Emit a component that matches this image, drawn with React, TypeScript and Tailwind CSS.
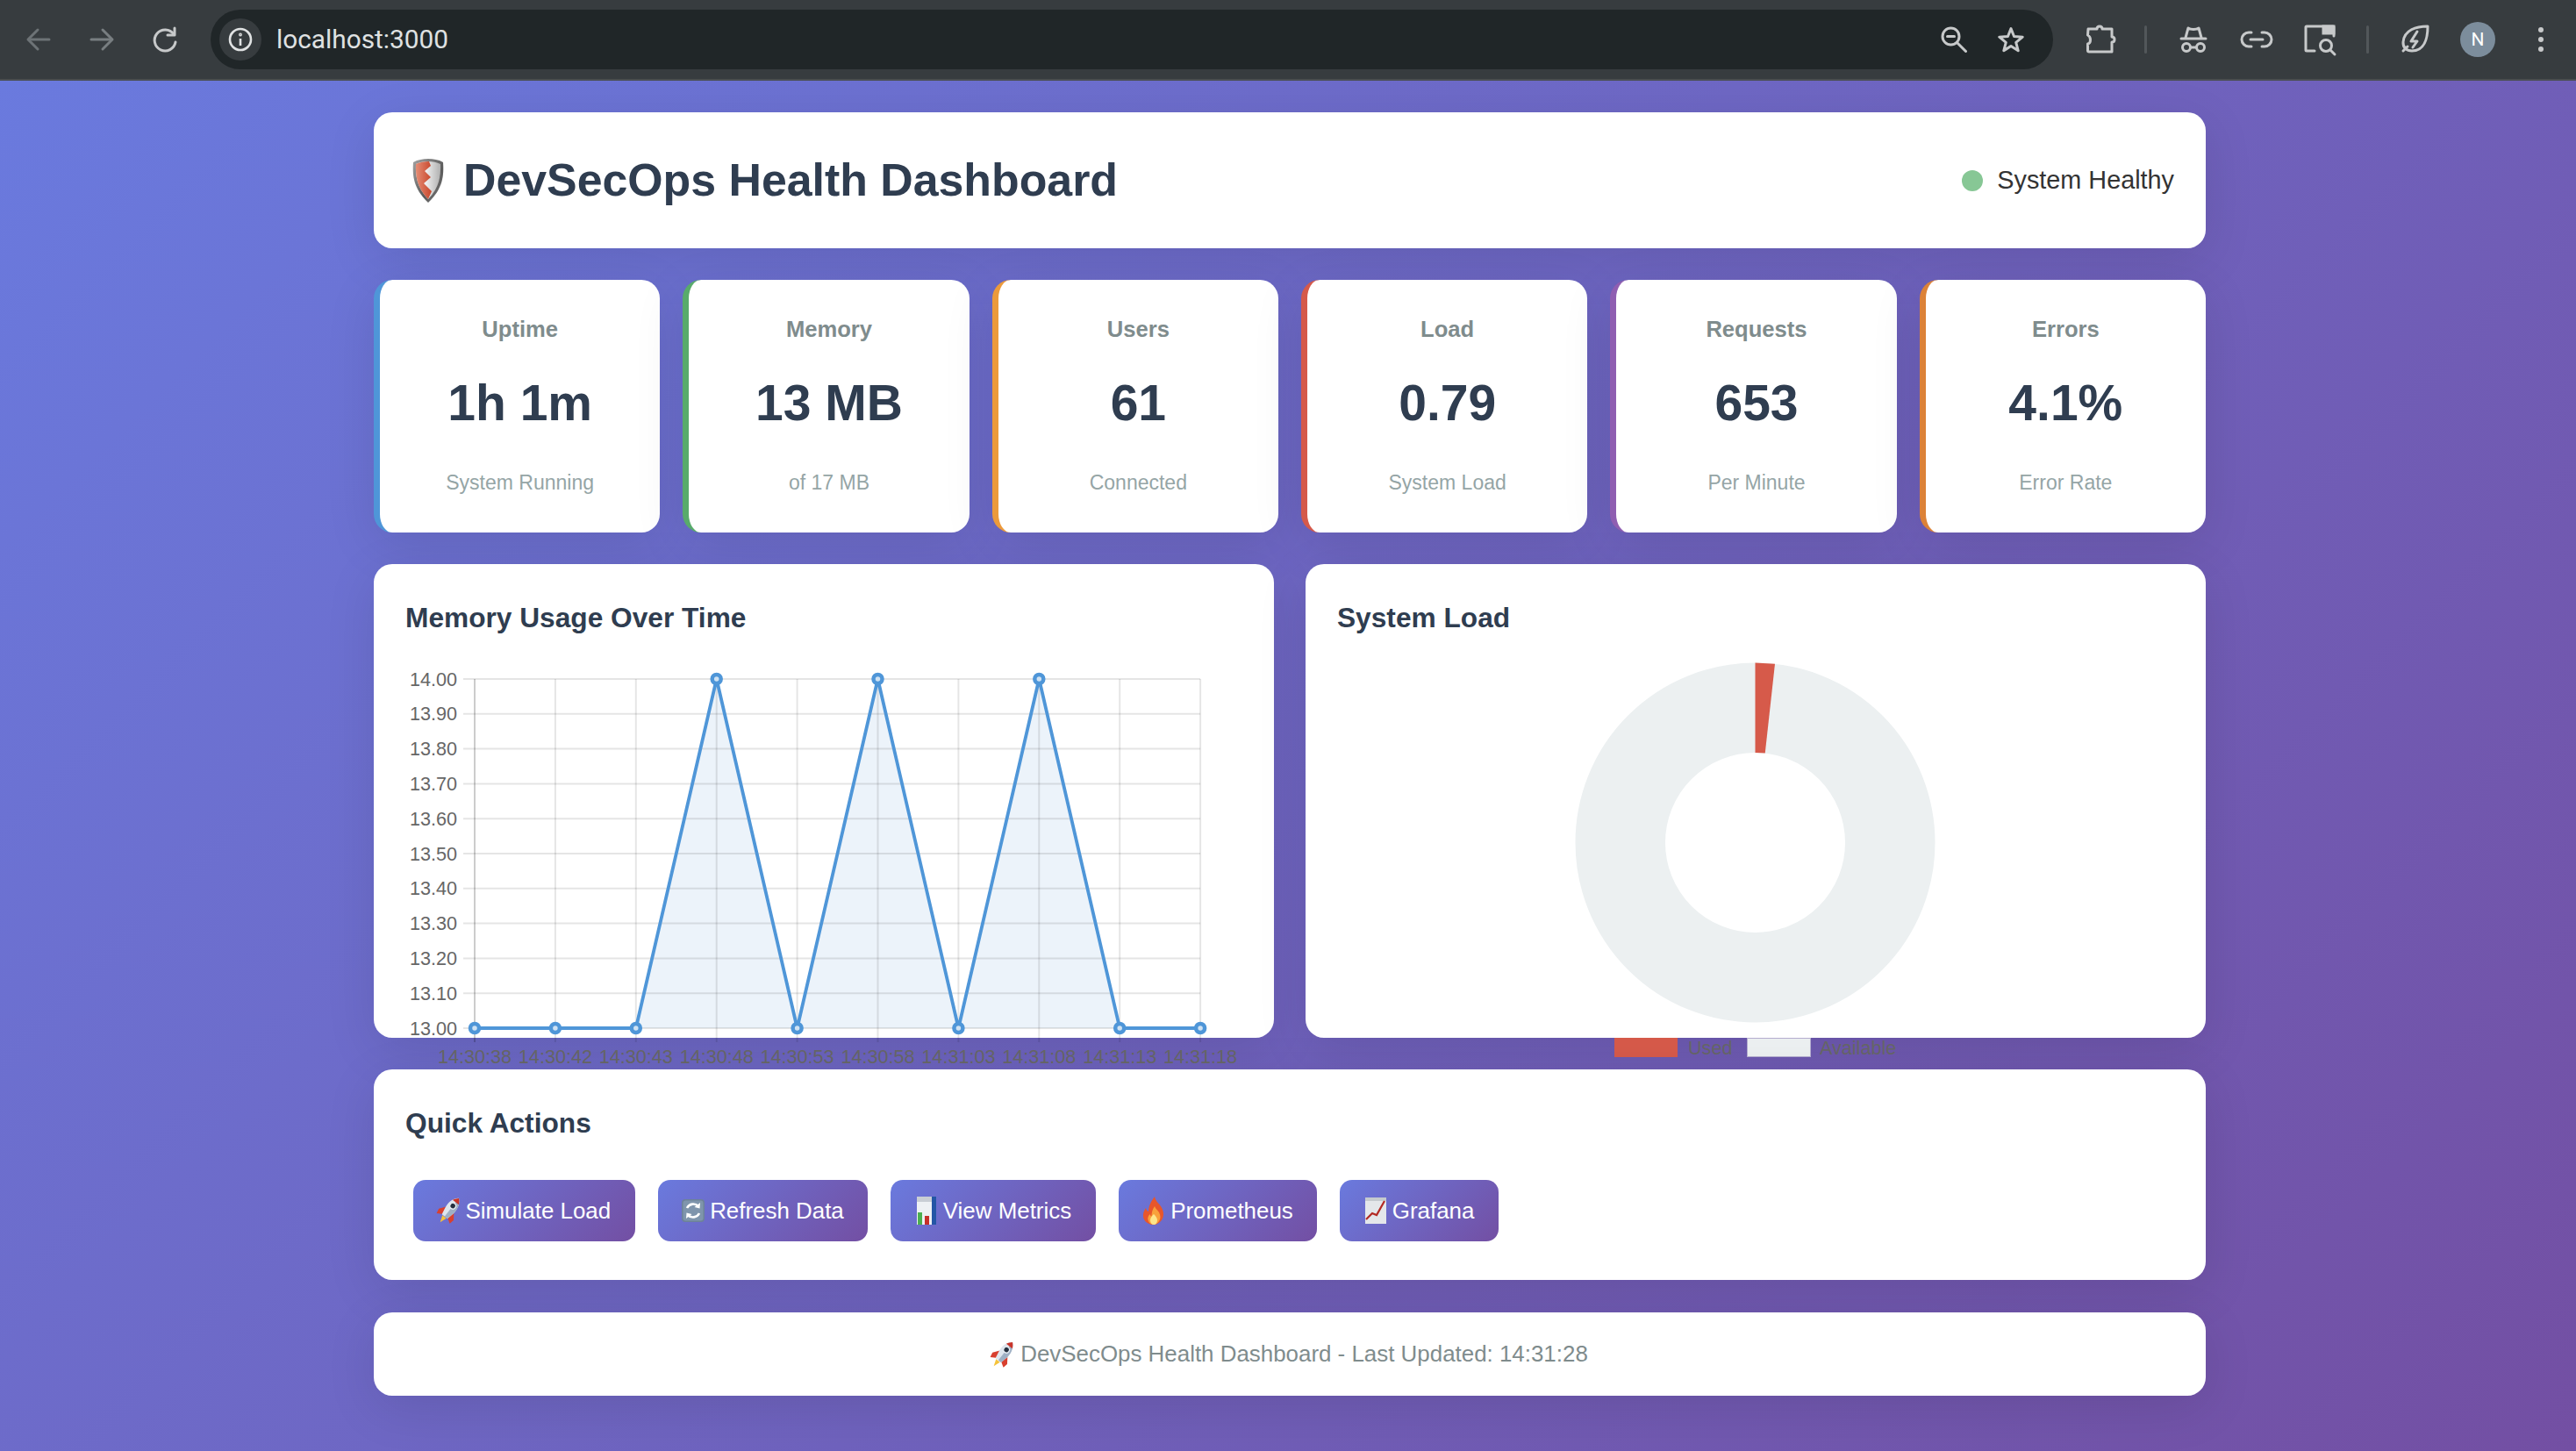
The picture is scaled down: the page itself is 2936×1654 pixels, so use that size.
import React from "react";

const ink = "#c7c9ca";

function Ico({ w = 40, children }: { w?: number; children: React.ReactNode }) {
  return (
    <svg width={w} height={40} viewBox={`0 0 ${w} 40`} fill="none" stroke={ink} strokeWidth={3} strokeLinecap="round" strokeLinejoin="round">
      {children}
    </svg>
  );
}

function Cell({ children, w = "w-[72px]" }: { children: React.ReactNode; w?: string }) {
  return <div className={`${w} h-full flex items-center justify-center shrink-0`}>{children}</div>;
}

function Toolbar() {
  return (
    <header className="h-[92px] shrink-0 bg-[#373c3f] border-b-2 border-[#4a4e51] flex items-center pl-[8px] pr-[4px] font-['Roboto',sans-serif]">
      <div className="flex h-full shrink-0 w-[232px]">
        <Cell>
          <Ico>
            <g stroke="#6d7376"><path d="M32 20H9" /><path d="M19 9 8 20l11 11" /></g>
          </Ico>
        </Cell>
        <Cell>
          <Ico>
            <g stroke="#787e81"><path d="M8 20h23" /><path d="m21 9 11 11-11 11" /></g>
          </Ico>
        </Cell>
        <Cell>
          <Ico>
            <path d="M30 14a12 12 0 1 0 2 9" />
            <path d="M31 7v8h-8" />
          </Ico>
        </Cell>
      </div>
      <div className="flex-1 h-[68px] bg-[#202628] rounded-full flex items-center pl-[10px]">
        <div className="w-[48px] h-[48px] rounded-full bg-[#373c3f] flex items-center justify-center">
          <svg width="30" height="30" viewBox="0 0 30 30" fill="none" stroke="#e0e2e3" strokeWidth="2.6">
            <circle cx="15" cy="15" r="12" />
            <path d="M15 14v8" />
            <circle cx="15" cy="9.5" r="0.6" fill="#e0e2e3" />
          </svg>
        </div>
        <span className="ml-[17px] text-[#dfe1e2] text-[29.8px] leading-none">localhost:3000</span>
        <div className="ml-auto flex items-center pr-[33px] gap-[35px]">
          <svg width="30" height="30" viewBox="0 0 30 30" fill="none" stroke={ink} strokeWidth="3" strokeLinecap="round">
            <circle cx="11.500" cy="11.500" r="9.500" />
            <path d="M7.500 11.500h8" />
            <path d="m18.500 18.500 10 10" />
          </svg>
          <svg width="30" height="30" viewBox="0 0 34 34" fill="none" stroke={ink} strokeWidth="3.400" strokeLinejoin="round">
            <path d="m17 3 4 10 11 .8-8.500 7 2.800 10.700L17 25.600 7.700 31.500l2.800-10.700L2 13.800 13 13Z" />
          </svg>
        </div>
      </div>
      <div className="flex h-full shrink-0 items-center ml-[18px]">
        <Cell>
          <Ico w={40}>
            <path d="M6 8h10c0-4 6-4 6 0h11v9c4 0 4 6 0 6v11H7c-1 0-1.500-.5-1.500-1.500V25c4-1 4-8 0-10Z" />
          </Ico>
        </Cell>
        <Cell w="w-[30px]">
          <div className="w-[3px] h-[32px] rounded-sm bg-[#52575a]" />
        </Cell>
        <div className="w-[4px]" />
        <Cell>
          <Ico>
            <path d="M6 19h28" />
            <path d="M11 18 14 7c3 2 9 2 12 0l3 11" />
            <circle cx="12" cy="29" r="4.500" />
            <circle cx="28" cy="29" r="4.500" />
            <path d="M16.500 29h7" />
          </Ico>
        </Cell>
        <Cell>
          <Ico>
            <path d="M14 12H11a8 8 0 0 0 0 16h3" />
            <path d="M26 12h3a8 8 0 0 1 0 16h-3" />
            <path d="M13 20h14" />
          </Ico>
        </Cell>
        <Cell>
          <svg width="40" height="40" viewBox="0 0 40 40" fill="none" stroke={ink} strokeWidth="3" strokeLinecap="round">
            <path d="M14 33H5a1 1 0 0 1-1-1V6a1 1 0 0 1 1-1h30a1 1 0 0 1 1 1v10" />
            <path d="M24 5h12v8H24Z" fill={ink} />
            <circle cx="27" cy="27" r="6.500" />
            <path d="m32 32 5 5" />
          </svg>
        </Cell>
        <Cell w="w-[36px]">
          <div className="w-[3px] h-[32px] rounded-sm bg-[#52575a]" />
        </Cell>
        <Cell>
          <Ico>
            <path d="M35 5C22 5 8 9 7 23c-.5 6 4 10 10 10 14 0 18-14 18-28Z" />
            <path d="m7 33 5-5" />
            <path d="m23 11-7 11h7l-5 7" strokeWidth="3" />
          </Ico>
        </Cell>
        <Cell>
          <div className="w-[40px] h-[40px] rounded-full bg-[#7c8d9c] flex items-center justify-center text-white text-[21px] leading-none">N</div>
        </Cell>
        <Cell>
          <div className="flex flex-col gap-[5px]">
            <div className="w-[6px] h-[6px] rounded-full bg-[#c7c9ca]" />
            <div className="w-[6px] h-[6px] rounded-full bg-[#c7c9ca]" />
            <div className="w-[6px] h-[6px] rounded-full bg-[#c7c9ca]" />
          </div>
        </Cell>
      </div>
    </header>
  );
}

function Shield() {
  return (
    <svg width="36" height="52" viewBox="0 0 36 52" className="shrink-0">
      <defs>
        <linearGradient id="sh-rim" x1="0" x2="1" y1="0" y2="1">
          <stop offset="0" stopColor="#a3a3a3" />
          <stop offset="0.6" stopColor="#5a5a5a" />
          <stop offset="1" stopColor="#7c7c7c" />
        </linearGradient>
        <linearGradient id="sh-red" x1="0" x2="1">
          <stop offset="0" stopColor="#e58d75" />
          <stop offset="1" stopColor="#c8472c" />
        </linearGradient>
        <linearGradient id="sh-wht" x1="0" x2="1">
          <stop offset="0.4" stopColor="#f0f0f0" />
          <stop offset="1" stopColor="#b0b0b0" />
        </linearGradient>
      </defs>
      <path d="M18 1c6 0 12 1 17 4 1 15 0 30-17 46C1 35 0 20 1 5c5-3 11-4 17-4Z" fill="url(#sh-rim)" />
      <path d="M18 4c5 0 10 1 14 3 .5 13-1 27-14 40C5 34 3.500 20 4 7c4-2 9-3 14-3Z" fill="url(#sh-wht)" />
      <path d="M19 4c-5 0-11 1-15 3-.5 13 1 27 14 40l4-9-9-9 8-7-7-7 7-6Z" fill="url(#sh-red)" />
    </svg>
  );
}

function Rocket() {
  return (
    <svg width="26" height="26" viewBox="0 0 26 26" className="shrink-0 overflow-visible">
      <g transform="rotate(38 13 13) translate(13 13) scale(1.12) translate(-13 -13)">
        <path d="M10.500 21h5l-2.500 7Z" fill="#f5c33b" />
        <path d="M8.500 11 3.500 18l1 5 5-3Z" fill="#d8402f" />
        <path d="M17.500 11l5 7-1 5-5-3Z" fill="#d8402f" />
        <path d="M13-3c4 3.500 5.800 8.500 5.300 14-.3 3.500-1.200 6.500-1.800 9.500h-7c-.6-3-1.500-6-1.800-9.500C7.200 5.500 9-.5 13-3Z" fill="#dfe6ee" />
        <path d="M13-3c4 3.500 5.800 8.500 5.300 14-.3 3.500-1.200 6.500-1.800 9.500H13Z" fill="#9fb0c4" />
        <path d="M13-3c1.700 1.500 3 3.300 3.900 5.300H9.100C10-.3 11.300-1.500 13-3Z" fill="#c9352a" />
        <circle cx="13" cy="7" r="3" fill="#24303f" stroke="#e7edf3" strokeWidth="1.200" />
      </g>
    </svg>
  );
}

function Refresh() {
  return (
    <svg width="26" height="32" viewBox="0 0 26 32" className="shrink-0">
      <rect x="0" y="3" width="26" height="26" rx="4" fill="#6d8299" />
      <rect x="1.500" y="4.500" width="23" height="23" rx="3" fill="#7f95ac" />
      <path d="M6 13a8 8 0 0 1 13-2" fill="none" stroke="#fff" strokeWidth="2.600" />
      <path d="m21 7-.5 6.500-6-1.500Z" fill="#fff" />
      <path d="M20 19a8 8 0 0 1-13 2" fill="none" stroke="#fff" strokeWidth="2.600" />
      <path d="m5 25 .5-6.500 6 1.500Z" fill="#fff" />
    </svg>
  );
}

function Bars() {
  return (
    <svg width="26" height="32" viewBox="0 0 26 32" className="shrink-0">
      <rect x="2" y="0" width="22" height="32" fill="#eef1f4" />
      <rect x="2" y="0" width="22" height="6" fill="#c9ced4" />
      <rect x="3" y="18" width="5" height="14" fill="#4caf50" />
      <rect x="11" y="22" width="5" height="10" fill="#c62f2a" />
      <rect x="19" y="0" width="5" height="32" fill="#2456a6" />
    </svg>
  );
}

function Fire() {
  return (
    <svg width="26" height="32" viewBox="0 0 26 32" className="shrink-0">
      <path d="M14 0c1 5 4 7 7 11 3 5 4 9 2 14-2 4-6 7-10 7S4 30 2 26c-2-4-1-9 2-13 .5 2 1.500 3.500 3 4C7 11 10 5 14 0Z" fill="#e8562b" />
      <path d="M14 11c1 3 3 4 5 7 2 4 2 7 0 10-1.500 2.500-4 4-6 4s-5-1.500-6-4c-1.500-3-.5-6 1.500-8 .5 1 1 2 2 2.500 0-4 1-8 3.500-11.500Z" fill="#f9a13a" />
      <path d="M13 20c2 2 4 4 4 7s-2 5-4 5-4-2-4-5 2-5 4-7Z" fill="#fde58a" />
    </svg>
  );
}

function Trend() {
  return (
    <svg width="26" height="30" viewBox="0 0 26 30" className="shrink-0">
      <rect x="1" y="0" width="24" height="30" fill="#e4e7ea" />
      <rect x="1" y="0" width="24" height="4" fill="#c5cace" />
      <path d="M2 25 9 18l5 2 9-16" fill="none" stroke="#b32a24" strokeWidth="2.200" />
    </svg>
  );
}

const cardBase = "bg-white rounded-[21px] shadow-[0_14px_57px_rgba(0,0,0,0.1)]";

function Stat({ label, value, sub, border }: { label: string; value: string; sub: string; border: string }) {
  return (
    <div className={`${cardBase} border-l-[7px] ${border} h-[288px] pt-[36px] text-center flex flex-col`}>
      <div className="text-[25.6px] leading-[40px] font-bold text-[#7f8c8d]">{label}</div>
      <div className="mt-[30px] text-[57px] leading-[68px] font-bold text-[#2f3d50]">{value}</div>
      <div className="mt-[42px] text-[23px] leading-[30px] text-[#95a5a6]">{sub}</div>
    </div>
  );
}

const times = ["14:30:38", "14:30:42", "14:30:43", "14:30:48", "14:30:53", "14:30:58", "14:31:03", "14:31:08", "14:31:13", "14:31:18"];
const values = [13, 13, 13, 14, 13, 14, 13, 14, 13, 13];
const ticks = ["14.00", "13.90", "13.80", "13.70", "13.60", "13.50", "13.40", "13.30", "13.20", "13.10", "13.00"];

function LineChart() {
  const x0 = 79;
  const dx = 91.9;
  const yt = 47;
  const yb = 445;
  const xs = times.map((_, i) => x0 + i * dx);
  const ys = values.map((v) => yb - (v - 13) * (yb - yt));
  const line = xs.map((x, i) => `${x},${ys[i]}`).join(" ");
  const area = `${x0},${yb} ${line} ${xs[9]},${yb}`;
  const grid = "rgba(0,0,0,0.1)";
  return (
    <svg width="954" height="500" className="block overflow-visible" fontFamily="'Liberation Sans',Arial,sans-serif">
      <polygon points={area} fill="#ecf3fa" />
      {ticks.map((t, i) => {
        const y = yt + (i * (yb - yt)) / 10;
        return (
          <g key={t}>
            <line x1={66} x2={xs[9]} y1={y} y2={y} stroke={grid} strokeWidth="2" />
            <text x={59} y={y + 7.500} textAnchor="end" fontSize="21.600" fill="#666">{t}</text>
          </g>
        );
      })}
      {times.map((t, i) => (
        <g key={t}>
          <line x1={xs[i]} x2={xs[i]} y1={yt} y2={461} stroke={i === 0 ? "rgba(0,0,0,0.2)" : grid} strokeWidth="2" />
          <text x={xs[i]} y={485} textAnchor="middle" fontSize="21.600" fill="#666">{t}</text>
        </g>
      ))}
      <polyline points={line} fill="none" stroke="#4f96d8" strokeWidth="3.800" />
      {xs.map((x, i) => (
        <circle key={x} cx={x} cy={ys[i]} r="5" fill="#cfe2f3" stroke="#4f96d8" strokeWidth="4.500" />
      ))}
    </svg>
  );
}

function Donut() {
  const cx = 476.5;
  const cy = 233.5;
  const R = 205;
  const r = 102.5;
  const a = (6.3 * Math.PI) / 180;
  const seg = `M${cx} ${cy - R} L${cx + R * Math.sin(a)} ${cy - R * Math.cos(a)} L${cx + r * Math.sin(a)} ${cy - r * Math.cos(a)} L${cx} ${cy - r} Z`;
  return (
    <svg width="954" height="500" className="block overflow-visible" fontFamily="'Liberation Sans',Arial,sans-serif">
      <circle cx={cx} cy={cy} r={(R + r) / 2} fill="none" stroke="#ecf0f1" strokeWidth={R - r} />
      <path d={seg} fill="#d65a4a" />
      <rect x="316" y="456" width="72" height="22" fill="#d65a4a" />
      <text x="400" y="475" fontSize="21.600" fill="#666">Used</text>
      <rect x="467.500" y="456.500" width="72" height="21" fill="#ecf0f1" stroke="#b5aed0" strokeWidth="1" />
      <text x="550" y="475" fontSize="21.600" fill="#666">Available</text>
    </svg>
  );
}

function CardTitle({ children }: { children: React.ReactNode }) {
  return <h3 className="h-[48px] text-[31.68px] leading-[50px] font-bold text-[#2f3d50]">{children}</h3>;
}

function ChartCard({ title, children }: { title: string; children: React.ReactNode }) {
  return (
    <div className={`${cardBase} h-[540px] p-[36px]`}>
      <CardTitle>{title}</CardTitle>
      {children}
    </div>
  );
}

function Btn({ icon, label }: { icon: React.ReactNode; label: string }) {
  return (
    <button className="h-[70px] px-[27.5px] rounded-[14px] bg-linear-[135deg,#6a7ade,#734fa3] text-white text-[25.92px] flex items-center gap-[6px] font-['Liberation_Sans',sans-serif]">
      {icon}
      {label}
    </button>
  );
}

export default function App() {
  return (
    <div className="w-[2936px] h-[1654px] overflow-hidden flex flex-col font-['Liberation_Sans',Arial,sans-serif]">
      <Toolbar />
      <main className="flex-1 bg-linear-[135deg,#6a7ade,#734fa3] pt-[36px] pl-[426px]">
        <div className="w-[2088px] flex flex-col">
          <section className={`${cardBase} h-[155px] px-[36px] flex items-center justify-between`}>
            <div className="flex items-center gap-[22px] pl-[8px]">
              <Shield />
              <h1 className="text-[51.84px] leading-none font-bold text-[#2f3d50]">DevSecOps Health Dashboard</h1>
            </div>
            <div className="flex items-center gap-[16px]">
              <div className="w-[24px] h-[24px] rounded-full bg-[#87c795]" />
              <span className="text-[28.8px] text-[#333]">System Healthy</span>
            </div>
          </section>

          <section className="grid grid-cols-6 gap-[26px] mt-[36px]">
            <Stat label="Uptime" value="1h 1m" sub="System Running" border="border-[#4f96d8]" />
            <Stat label="Memory" value="13 MB" sub="of 17 MB" border="border-[#58ab6b]" />
            <Stat label="Users" value="61" sub="Connected" border="border-[#ec9a3b]" />
            <Stat label="Load" value="0.79" sub="System Load" border="border-[#d5594a]" />
            <Stat label="Requests" value="653" sub="Per Minute" border="border-[#8f5eb1]" />
            <Stat label="Errors" value="4.1%" sub="Error Rate" border="border-[#dc8238]" />
          </section>

          <section className="grid grid-cols-2 gap-[36px] mt-[36px]">
            <ChartCard title="Memory Usage Over Time">
              <LineChart />
            </ChartCard>
            <ChartCard title="System Load">
              <Donut />
            </ChartCard>
          </section>

          <section className={`${cardBase} h-[240px] p-[36px] mt-[36px]`}>
            <CardTitle>Quick Actions</CardTitle>
            <div className="flex gap-[26px] mt-[42px] ml-[9px]">
              <Btn icon={<Rocket />} label="Simulate Load" />
              <Btn icon={<Refresh />} label="Refresh Data" />
              <Btn icon={<Bars />} label="View Metrics" />
              <Btn icon={<Fire />} label="Prometheus" />
              <Btn icon={<Trend />} label="Grafana" />
            </div>
          </section>

          <footer className={`${cardBase} h-[95px] mt-[37px] flex items-center justify-center gap-[7px] text-[25.92px] text-[#7f8c8d]`}>
            <Rocket />
            <span>DevSecOps Health Dashboard - Last Updated: 14:31:28</span>
          </footer>
        </div>
      </main>
    </div>
  );
}
